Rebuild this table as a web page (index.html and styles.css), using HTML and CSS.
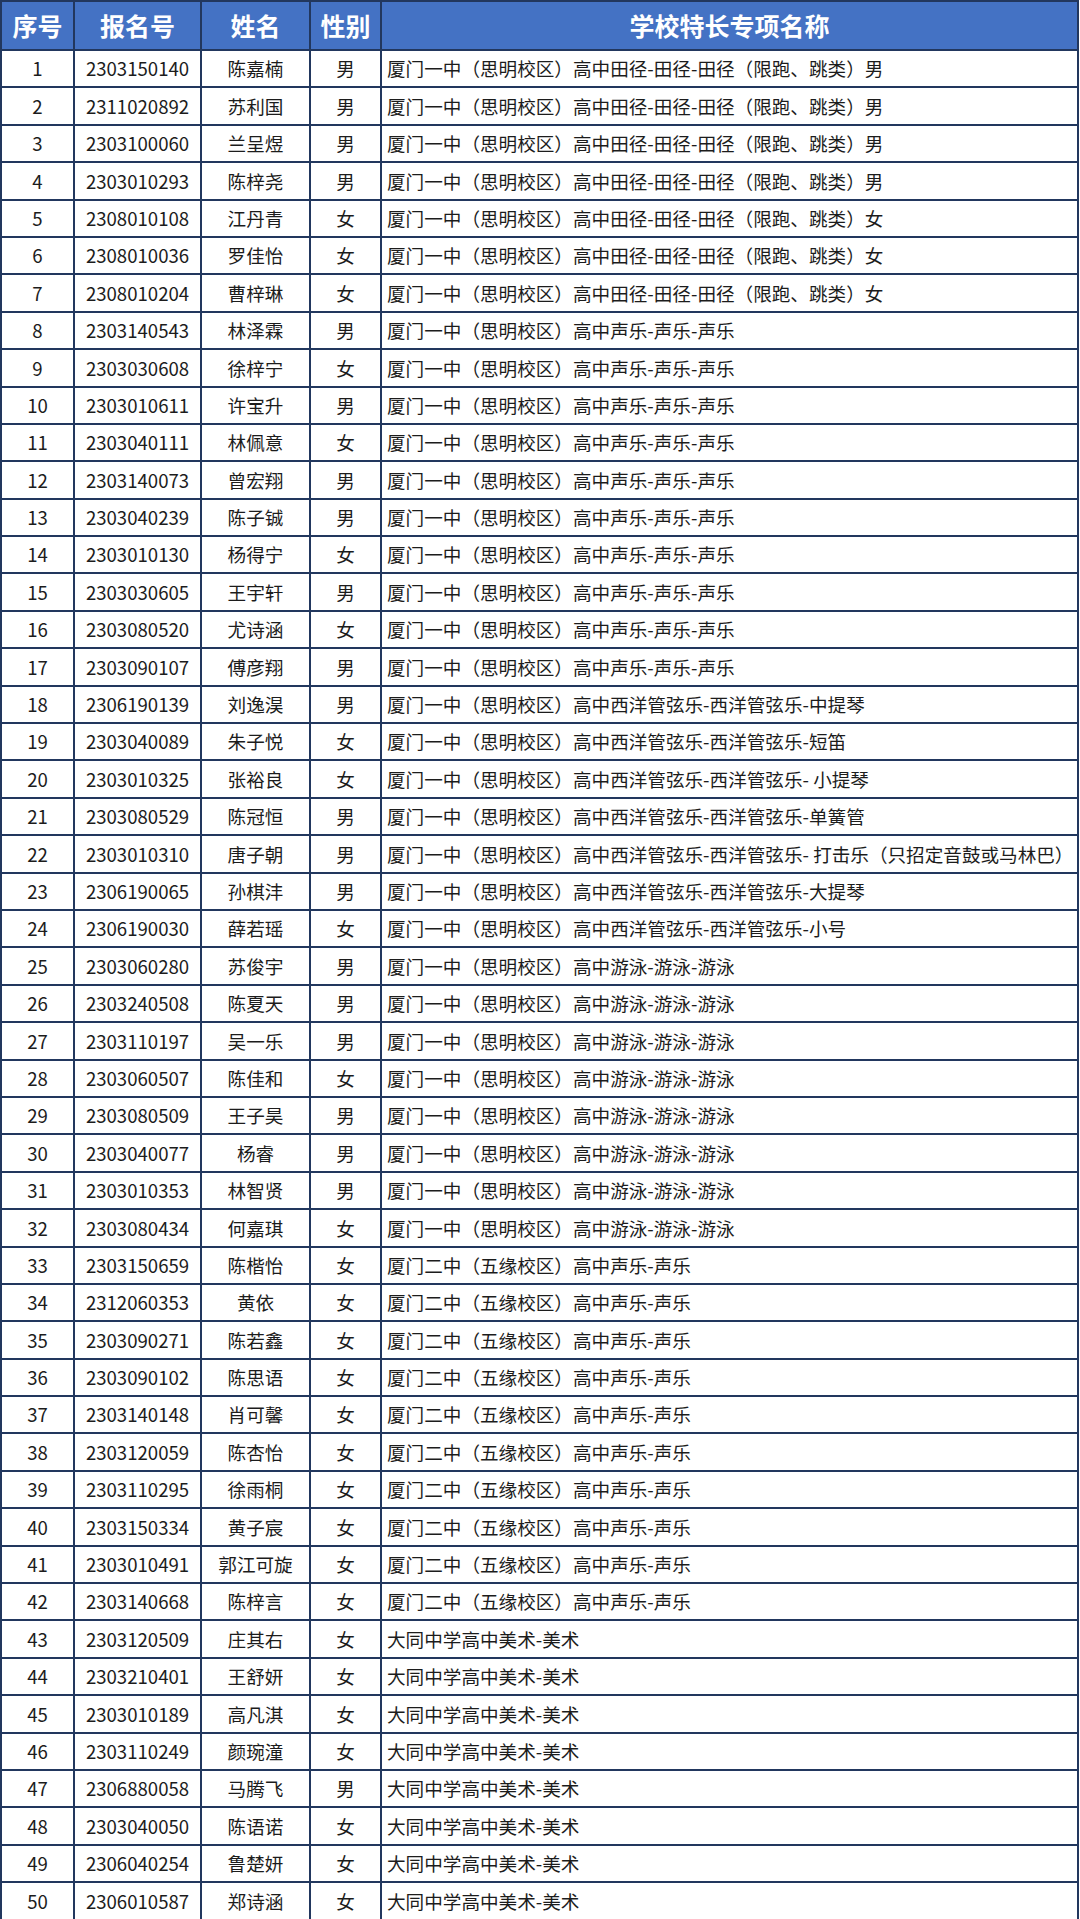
FILE: index.html
```html
<!DOCTYPE html>
<html lang="zh-CN">
<head>
<meta charset="utf-8">
<title>名单</title>
<link rel="stylesheet" href="styles.css">
</head>
<body>
<table class="roster">
<colgroup>
<col class="c-no"><col class="c-id"><col class="c-name"><col class="c-sex"><col class="c-item">
</colgroup>
<thead>
<tr class="head"><th>序号</th><th>报名号</th><th>姓名</th><th>性别</th><th>学校特长专项名称</th></tr>
</thead>
<tbody>
<tr><td>1</td><td>2303150140</td><td>陈嘉楠</td><td>男</td><td class="item">厦门一中（思明校区）高中田径-田径-田径（限跑、跳类）男</td></tr>
<tr><td>2</td><td>2311020892</td><td>苏利国</td><td>男</td><td class="item">厦门一中（思明校区）高中田径-田径-田径（限跑、跳类）男</td></tr>
<tr><td>3</td><td>2303100060</td><td>兰呈煜</td><td>男</td><td class="item">厦门一中（思明校区）高中田径-田径-田径（限跑、跳类）男</td></tr>
<tr><td>4</td><td>2303010293</td><td>陈梓尧</td><td>男</td><td class="item">厦门一中（思明校区）高中田径-田径-田径（限跑、跳类）男</td></tr>
<tr><td>5</td><td>2308010108</td><td>江丹青</td><td>女</td><td class="item">厦门一中（思明校区）高中田径-田径-田径（限跑、跳类）女</td></tr>
<tr><td>6</td><td>2308010036</td><td>罗佳怡</td><td>女</td><td class="item">厦门一中（思明校区）高中田径-田径-田径（限跑、跳类）女</td></tr>
<tr><td>7</td><td>2308010204</td><td>曹梓琳</td><td>女</td><td class="item">厦门一中（思明校区）高中田径-田径-田径（限跑、跳类）女</td></tr>
<tr><td>8</td><td>2303140543</td><td>林泽霖</td><td>男</td><td class="item">厦门一中（思明校区）高中声乐-声乐-声乐</td></tr>
<tr><td>9</td><td>2303030608</td><td>徐梓宁</td><td>女</td><td class="item">厦门一中（思明校区）高中声乐-声乐-声乐</td></tr>
<tr><td>10</td><td>2303010611</td><td>许宝升</td><td>男</td><td class="item">厦门一中（思明校区）高中声乐-声乐-声乐</td></tr>
<tr><td>11</td><td>2303040111</td><td>林佩意</td><td>女</td><td class="item">厦门一中（思明校区）高中声乐-声乐-声乐</td></tr>
<tr><td>12</td><td>2303140073</td><td>曾宏翔</td><td>男</td><td class="item">厦门一中（思明校区）高中声乐-声乐-声乐</td></tr>
<tr><td>13</td><td>2303040239</td><td>陈子铖</td><td>男</td><td class="item">厦门一中（思明校区）高中声乐-声乐-声乐</td></tr>
<tr><td>14</td><td>2303010130</td><td>杨得宁</td><td>女</td><td class="item">厦门一中（思明校区）高中声乐-声乐-声乐</td></tr>
<tr><td>15</td><td>2303030605</td><td>王宇轩</td><td>男</td><td class="item">厦门一中（思明校区）高中声乐-声乐-声乐</td></tr>
<tr><td>16</td><td>2303080520</td><td>尤诗涵</td><td>女</td><td class="item">厦门一中（思明校区）高中声乐-声乐-声乐</td></tr>
<tr><td>17</td><td>2303090107</td><td>傅彦翔</td><td>男</td><td class="item">厦门一中（思明校区）高中声乐-声乐-声乐</td></tr>
<tr><td>18</td><td>2306190139</td><td>刘逸淏</td><td>男</td><td class="item">厦门一中（思明校区）高中西洋管弦乐-西洋管弦乐-中提琴</td></tr>
<tr><td>19</td><td>2303040089</td><td>朱子悦</td><td>女</td><td class="item">厦门一中（思明校区）高中西洋管弦乐-西洋管弦乐-短笛</td></tr>
<tr><td>20</td><td>2303010325</td><td>张裕良</td><td>女</td><td class="item">厦门一中（思明校区）高中西洋管弦乐-西洋管弦乐- 小提琴</td></tr>
<tr><td>21</td><td>2303080529</td><td>陈冠恒</td><td>男</td><td class="item">厦门一中（思明校区）高中西洋管弦乐-西洋管弦乐-单簧管</td></tr>
<tr><td>22</td><td>2303010310</td><td>唐子朝</td><td>男</td><td class="item">厦门一中（思明校区）高中西洋管弦乐-西洋管弦乐- 打击乐（只招定音鼓或马林巴）</td></tr>
<tr><td>23</td><td>2306190065</td><td>孙棋沣</td><td>男</td><td class="item">厦门一中（思明校区）高中西洋管弦乐-西洋管弦乐-大提琴</td></tr>
<tr><td>24</td><td>2306190030</td><td>薛若瑶</td><td>女</td><td class="item">厦门一中（思明校区）高中西洋管弦乐-西洋管弦乐-小号</td></tr>
<tr><td>25</td><td>2303060280</td><td>苏俊宇</td><td>男</td><td class="item">厦门一中（思明校区）高中游泳-游泳-游泳</td></tr>
<tr><td>26</td><td>2303240508</td><td>陈夏天</td><td>男</td><td class="item">厦门一中（思明校区）高中游泳-游泳-游泳</td></tr>
<tr><td>27</td><td>2303110197</td><td>吴一乐</td><td>男</td><td class="item">厦门一中（思明校区）高中游泳-游泳-游泳</td></tr>
<tr><td>28</td><td>2303060507</td><td>陈佳和</td><td>女</td><td class="item">厦门一中（思明校区）高中游泳-游泳-游泳</td></tr>
<tr><td>29</td><td>2303080509</td><td>王子昊</td><td>男</td><td class="item">厦门一中（思明校区）高中游泳-游泳-游泳</td></tr>
<tr><td>30</td><td>2303040077</td><td>杨睿</td><td>男</td><td class="item">厦门一中（思明校区）高中游泳-游泳-游泳</td></tr>
<tr><td>31</td><td>2303010353</td><td>林智贤</td><td>男</td><td class="item">厦门一中（思明校区）高中游泳-游泳-游泳</td></tr>
<tr><td>32</td><td>2303080434</td><td>何嘉琪</td><td>女</td><td class="item">厦门一中（思明校区）高中游泳-游泳-游泳</td></tr>
<tr><td>33</td><td>2303150659</td><td>陈楷怡</td><td>女</td><td class="item">厦门二中（五缘校区）高中声乐-声乐</td></tr>
<tr><td>34</td><td>2312060353</td><td>黄依</td><td>女</td><td class="item">厦门二中（五缘校区）高中声乐-声乐</td></tr>
<tr><td>35</td><td>2303090271</td><td>陈若鑫</td><td>女</td><td class="item">厦门二中（五缘校区）高中声乐-声乐</td></tr>
<tr><td>36</td><td>2303090102</td><td>陈思语</td><td>女</td><td class="item">厦门二中（五缘校区）高中声乐-声乐</td></tr>
<tr><td>37</td><td>2303140148</td><td>肖可馨</td><td>女</td><td class="item">厦门二中（五缘校区）高中声乐-声乐</td></tr>
<tr><td>38</td><td>2303120059</td><td>陈杏怡</td><td>女</td><td class="item">厦门二中（五缘校区）高中声乐-声乐</td></tr>
<tr><td>39</td><td>2303110295</td><td>徐雨桐</td><td>女</td><td class="item">厦门二中（五缘校区）高中声乐-声乐</td></tr>
<tr><td>40</td><td>2303150334</td><td>黄子宸</td><td>女</td><td class="item">厦门二中（五缘校区）高中声乐-声乐</td></tr>
<tr><td>41</td><td>2303010491</td><td>郭江可旋</td><td>女</td><td class="item">厦门二中（五缘校区）高中声乐-声乐</td></tr>
<tr><td>42</td><td>2303140668</td><td>陈梓言</td><td>女</td><td class="item">厦门二中（五缘校区）高中声乐-声乐</td></tr>
<tr><td>43</td><td>2303120509</td><td>庄其右</td><td>女</td><td class="item">大同中学高中美术-美术</td></tr>
<tr><td>44</td><td>2303210401</td><td>王舒妍</td><td>女</td><td class="item">大同中学高中美术-美术</td></tr>
<tr><td>45</td><td>2303010189</td><td>高凡淇</td><td>女</td><td class="item">大同中学高中美术-美术</td></tr>
<tr><td>46</td><td>2303110249</td><td>颜琬潼</td><td>女</td><td class="item">大同中学高中美术-美术</td></tr>
<tr><td>47</td><td>2306880058</td><td>马腾飞</td><td>男</td><td class="item">大同中学高中美术-美术</td></tr>
<tr><td>48</td><td>2303040050</td><td>陈语诺</td><td>女</td><td class="item">大同中学高中美术-美术</td></tr>
<tr><td>49</td><td>2306040254</td><td>鲁楚妍</td><td>女</td><td class="item">大同中学高中美术-美术</td></tr>
<tr><td>50</td><td>2306010587</td><td>郑诗涵</td><td>女</td><td class="item">大同中学高中美术-美术</td></tr>
</tbody>
</table>
</body>
</html>
```
FILE: styles.css
```css
html, body {
  margin: 0;
  padding: 0;
  background: #ffffff;
}

body {
  font-family: "Noto Sans CJK SC", "Noto Sans", sans-serif;
  color: #1c1c1c;
}

.roster {
  width: 1079px;
  border-collapse: collapse;
  table-layout: fixed;
  border: 2px solid #22375e;
}

.c-no { width: 73px; }
.c-id { width: 127px; }
.c-name { width: 109px; }
.c-sex { width: 71px; }
.c-item { width: auto; }

.roster th,
.roster td {
  border: 2px solid #22375e;
  padding: 0;
  text-align: center;
  white-space: nowrap;
  overflow: hidden;
}

.head {
  height: 49px;
}

.head th {
  background: #4472c4;
  color: #ffffff;
  font-size: 25px;
  font-weight: 700;
  line-height: 1;
}

.roster tbody tr {
  height: 37.4px;
}

.roster td {
  font-size: 18.6px;
  line-height: 1;
}

.roster td.item {
  text-align: left;
  padding-left: 5px;
}
```
